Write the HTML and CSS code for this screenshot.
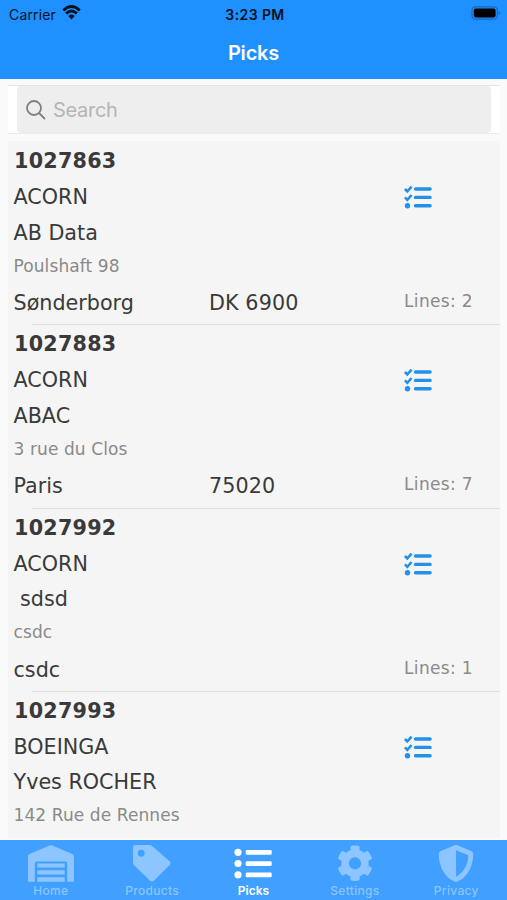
FILE: index.html
```html
<!DOCTYPE html>
<html lang="en">

<head>
    <meta charset="UTF-8">
    <title>Picks</title>
    <link rel="stylesheet" href="styles.css">
</head>

<body>
    <svg class="symbols" width="0" height="0">
        <symbol id="checklist" viewBox="0 0 28 24">
            <path d="M.9 4l2.4 2.4L7.600 1.600M.9 12.400l2.400 2.400L7.600 10" fill="none" stroke="currentColor" stroke-width="2.600" />
            <circle cx="3.500" cy="20.700" r="2.700" fill="currentColor" />
            <path d="M11.500 4h14.600M11.500 12.400h14.600M11.500 20.700h14.600" fill="none" stroke="currentColor" stroke-width="3.400" stroke-linecap="round" />
        </symbol>
    </svg>

    <!-- Status bar and title -->
    <header class="header">
        <div class="status">
            <div class="carrier">
                <span>Carrier</span>
                <svg width="19" height="15" viewBox="0 0 18 14">
                    <path d="M1.2 5Q9-2.4 16.8 5M3.9 8Q9 3.2 14.1 8" fill="none" stroke="#06121f" stroke-width="2.6" />
                    <path d="M5.9 10.3Q9 7.6 12.1 10.3L9 13.6z" fill="#06121f" />
                </svg>
            </div>
            <div class="time">3:23 PM</div>
            <svg class="battery" width="30" height="14" viewBox="0 0 30 14">
                <rect x="1" y=".8" width="25.4" height="12.4" rx="3.6" fill="none" stroke="#1468b8" stroke-width="1.2" />
                <rect x="2.8" y="2.6" width="21.8" height="8.8" rx="1.8" />
                <path d="M27.8 5v4q1.5-.6 1.5-2t-1.5-2z" fill="#1468b8" />
            </svg>
        </div>
        <h1>Picks</h1>
    </header>

    <main class="content">
        <!-- Search -->
        <div class="search-bar">
            <div class="search">
                <svg width="20" height="20" viewBox="0 0 20 20">
                    <circle cx="8" cy="8" r="7" />
                    <path d="M13 13l6 6" />
                </svg>
                <span>Search</span>
            </div>
        </div>

        <!-- Pick list -->
        <div class="picks">
            <div class="pick">
                <div class="number">1027863</div>
                <div class="company">ACORN</div>
                <div class="name">AB Data</div>
                <div class="street">Poulshaft 98</div>
                <div class="city">Sønderborg</div>
                <div class="zip">DK 6900</div>
                <div class="lines">Lines: 2</div>
                <svg class="check"><use href="#checklist" /></svg>
            </div>
            <div class="pick">
                <div class="number">1027883</div>
                <div class="company">ACORN</div>
                <div class="name">ABAC</div>
                <div class="street">3 rue du Clos</div>
                <div class="city">Paris</div>
                <div class="zip">75020</div>
                <div class="lines">Lines: 7</div>
                <svg class="check"><use href="#checklist" /></svg>
            </div>
            <div class="pick">
                <div class="number">1027992</div>
                <div class="company">ACORN</div>
                <div class="name"> sdsd</div>
                <div class="street">csdc</div>
                <div class="city">csdc</div>
                <div class="lines">Lines: 1</div>
                <svg class="check"><use href="#checklist" /></svg>
            </div>
            <div class="pick">
                <div class="number">1027993</div>
                <div class="company">BOEINGA</div>
                <div class="name">Yves ROCHER</div>
                <div class="street">142 Rue de Rennes</div>
                <svg class="check"><use href="#checklist" /></svg>
            </div>
        </div>
    </main>

    <!-- Tabs -->
    <nav class="tabs">
        <div class="tab">
            <svg width="46" height="38" viewBox="0 0 46 38">
                <path d="M0 11.5Q0 9.6 1.7 8.9L21.6.6Q23 0 24.4.6L44.3 8.9Q46 9.6 46 11.5V36.7H39.2V18.5Q39.2 16.4 37.2 16.4H8.8Q6.8 16.4 6.8 18.5V36.7H0z" />
                <path d="M9.3 18.6h27.4v4H9.3zM9.3 25.3h27.4v4.2H9.3zM9.3 32.2h27.4v4.5H9.3z" />
            </svg>
            <span>Home</span>
        </div>
        <div class="tab">
            <svg width="38" height="38" viewBox="0 0 38 38">
                <path fill-rule="evenodd" d="M0 3.4Q0 0 3.4 0H16.6Q18.1 0 19.2 1.1L36.6 16.3Q38.4 18.2 36.6 20.1L21.2 35.6Q19 37.6 16.9 35.6L1.1 20.2Q0 19.1 0 17.5zM8.2 4.8A3.4 3.4 0 1 0 8.2 11.6A3.4 3.4 0 1 0 8.2 4.8z" />
            </svg>
            <span>Products</span>
        </div>
        <div class="tab active">
            <svg width="38" height="38" viewBox="0 0 38 38">
                <circle cx="4" cy="7.3" r="3.6" />
                <circle cx="4" cy="18.5" r="3.6" />
                <circle cx="4" cy="29.8" r="3.6" />
                <rect x="11.7" y="5" width="26" height="4.8" rx="1.3" />
                <rect x="11.7" y="16.2" width="26" height="4.8" rx="1.3" />
                <rect x="11.7" y="27.5" width="26" height="4.8" rx="1.3" />
            </svg>
            <span>Picks</span>
        </div>
        <div class="tab">
            <svg width="38" height="38" viewBox="0 0 532 532">
                <path d="M497.4 315.7l-42.6-24.6c4.3-23.2 4.3-47 0-70.2l42.6-24.6c4.9-2.8 7.1-8.6 5.5-14-11.1-35.6-30-67.8-54.7-94.6-3.8-4.1-10-5.1-14.8-2.3L390.8 110c-17.9-15.4-38.5-27.3-60.8-35.1V25.8c0-5.6-3.9-10.5-9.4-11.7-36.7-8.2-74.3-7.8-109.2 0-5.5 1.2-9.4 6.1-9.4 11.7V75c-22.2 7.9-42.8 19.8-60.8 35.1L98.700 85.500c-4.900-2.800-11-1.900-14.800 2.300-24.700 26.700-43.600 58.900-54.700 94.600-1.700 5.400.6 11.200 5.500 14L77.300 221c-4.300 23.200-4.300 47 0 70.200l-42.600 24.600c-4.900 2.800-7.100 8.600-5.500 14 11.100 35.600 30 67.800 54.700 94.600 3.800 4.100 10 5.100 14.800 2.300l42.600-24.600c17.900 15.400 38.500 27.300 60.800 35.100v49.200c0 5.600 3.900 10.500 9.400 11.700 36.700 8.200 74.300 7.800 109.200 0 5.500-1.200 9.400-6.100 9.400-11.700v-49.200c22.200-7.900 42.800-19.800 60.800-35.100l42.600 24.600c4.900 2.800 11 1.900 14.800-2.300 24.700-26.700 43.600-58.900 54.700-94.600 1.500-5.500-.7-11.300-5.600-14.100zM266 341c-46.800 0-85-38.200-85-85s38.200-85 85-85 85 38.200 85 85-38.200 85-85 85z" />
            </svg>
            <span>Settings</span>
        </div>
        <div class="tab">
            <svg width="36" height="38" viewBox="0 0 36 38">
                <path fill-rule="evenodd" d="M16.6.3Q18-.3 19.4.3L33.2 6Q35.2 7 35.2 9.2C35.2 22 29 32.4 19.4 36.6Q18 37.2 16.6 36.6C7 32.4.8 22 .8 9.2Q.8 7 2.8 6zM18 5.2V31.8C25 28.2 30 20.5 30.4 10.3z" />
            </svg>
            <span>Privacy</span>
        </div>
    </nav>
</body>

</html>
```
FILE: styles.css
```css
* {
    box-sizing: border-box;
}

body {
    margin: 0;
    height: 900px;
    display: flex;
    flex-direction: column;
    overflow: hidden;
    background: #fafafa;
    font-family: 'DejaVu Sans', sans-serif;
    color: #3a3a3a;
}

.symbols {
    position: absolute;
}

.header {
    flex: none;
    height: 79px;
    background: #1e90ff;
    font-family: Inter, sans-serif;
}

.status {
    display: grid;
    grid-template-columns: 1fr auto 1fr;
    align-items: center;
    height: 28px;
    padding: 0 6px 0 9px;
    color: #06121f;
    font-size: 14px;
}

.carrier {
    display: flex;
    align-items: center;
    gap: 6px;
    letter-spacing: 0.15px;
}

.carrier svg {
    margin-top: -3px;
}

.time {
    font-weight: 600;
    letter-spacing: 0.4px;
}

.battery {
    justify-self: end;
    margin-top: -2px;
}

h1 {
    margin: 0;
    color: #fff;
    font-size: 20px;
    font-weight: 600;
    letter-spacing: -0.2px;
    line-height: 50px;
    text-align: center;
}

.content {
    flex: 1;
    min-height: 0;
    padding: 6px 7px 0 8px;
    overflow: hidden;
}

.search-bar {
    height: 49px;
    padding: 0 9px;
    background: #fff;
    border-top: 1px solid #e4e4e4;
    border-bottom: 1px solid #ececec;
}

.search {
    display: flex;
    align-items: center;
    gap: 7px;
    height: 47px;
    padding-left: 9px;
    border-radius: 4px;
    background: #eee;
    color: #b5b5b5;
    font-family: Inter, sans-serif;
    font-size: 20px;
    letter-spacing: -0.3px;
}

.search svg {
    fill: none;
    stroke: #808080;
    stroke-width: 1.8;
}

.picks {
    margin-top: 7px;
    height: 697px;
    padding-top: 1px;
    background: #f5f5f5;
    overflow: hidden;
}

.pick {
    display: grid;
    grid-template-columns: 195px 195px 1fr;
    grid-template-rows: 36px 36px 35px 31px 44px;
    align-items: center;
    height: 183.3px;
    padding: 1px 0 0 6px;
    font-size: 20.7px;
    white-space: pre;
    background: linear-gradient(#dedede, #dedede) 24px 100% / 100% 1px no-repeat;
}

.number,
.company,
.name,
.street {
    grid-column: 1 / 3;
}

.company,
.name,
.street,
.city {
    margin-left: -0.5px;
}

.number {
    font-weight: bold;
    letter-spacing: 0.25px;
}

.street {
    color: #8a8a8a;
    font-size: 17px;
    letter-spacing: 0.1px;
}

.city,
.zip,
.lines {
    grid-row: 5;
}

.zip {
    letter-spacing: 0.1px;
}

.lines {
    grid-column: 3;
    margin-top: -4px;
    color: #8a8a8a;
    font-size: 17px;
    letter-spacing: 0.35px;
}

.check {
    grid-column: 3;
    grid-row: 2;
    width: 28px;
    height: 24px;
    color: #2590e8;
}

.tabs {
    flex: none;
    display: grid;
    grid-template-columns: repeat(5, 1fr);
    height: 60px;
    background: #409fff;
    color: #8cc5ff;
    font-family: Inter, sans-serif;
    font-size: 12px;
    font-weight: 500;
    letter-spacing: 0.3px;
}

.tab {
    display: flex;
    flex-direction: column;
    align-items: center;
    padding-top: 5px;
    line-height: 16px;
}

.tab svg {
    flex: none;
    fill: currentColor;
}

.active {
    color: #fff;
    font-weight: 600;
    letter-spacing: 0;
}
```
